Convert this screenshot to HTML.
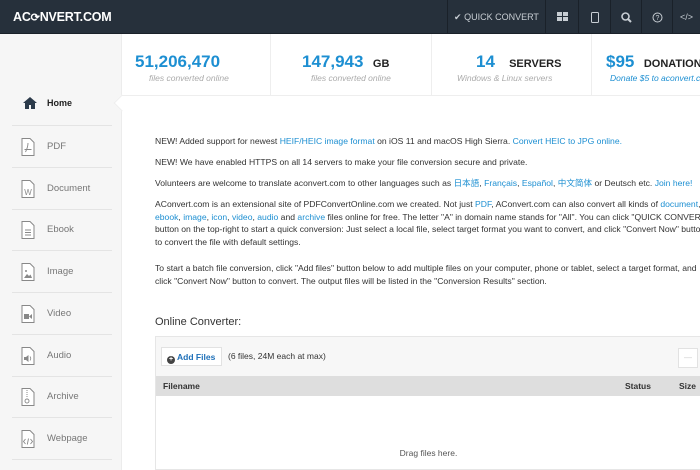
<!DOCTYPE html>
<html><head><meta charset="utf-8"><style>
*{margin:0;padding:0;box-sizing:border-box}
body{width:700px;height:470px;overflow:hidden;background:#fff;font-family:"Liberation Sans","Noto Sans CJK SC",sans-serif;position:relative;color:#333}
.hd{position:absolute;left:0;top:0;width:700px;height:34px;background:#26303b;border-bottom:1px solid #1a2129}
.logo{position:absolute;left:13px;top:10px;color:#fff;font-weight:bold;font-size:12.5px;letter-spacing:-0.2px}
.nav{position:absolute;top:0;height:34px;border-left:1px solid #1a2129;color:#c8ced4;font-size:9px;display:flex;align-items:center;justify-content:center}
.side{position:absolute;left:0;top:34px;width:122px;height:436px;background:#f6f6f6;border-right:1px solid #ececec}
.it{position:absolute;left:12px;width:100px;height:42px;border-bottom:1px solid #e4e4e4;font-size:9.5px;color:#777}
.it span{position:absolute;left:35px;top:15px}
.it svg{position:absolute;left:9px;top:12px}
.stat{position:absolute;top:34px;height:61px;border-right:1px solid #eee;text-align:center}
.n{color:#1d8fd2;font-size:17px;font-weight:bold;position:absolute;top:18px;white-space:nowrap}
.u{color:#222;font-size:11px;font-weight:bold}
.s{color:#aaa;font-size:8.5px;font-style:italic;position:absolute;top:39px;white-space:nowrap}
p{position:absolute;left:155px;font-size:8.6px;line-height:12.5px;color:#333;white-space:nowrap}
a{color:#1d8fd2;text-decoration:none}
</style></head><body>
<div class="hd">
<div class="logo">AC<span style="font-size:11px">⟳</span>NVERT.COM</div>
<div class="nav" style="left:447px;width:98px">✔&nbsp;QUICK CONVERT</div>
<div class="nav" style="left:545px;width:33px"><svg width="11" height="10"><rect x="0" y="0" width="5" height="4" fill="#c8ced4"/><rect x="6" y="0" width="5" height="4" fill="#c8ced4"/><rect x="0" y="5" width="5" height="4" fill="#c8ced4"/><rect x="6" y="5" width="5" height="4" fill="#c8ced4"/></svg></div>
<div class="nav" style="left:578px;width:32px"><svg width="8" height="11"><rect x="0.5" y="0.5" width="7" height="10" rx="1" fill="none" stroke="#c8ced4"/></svg></div>
<div class="nav" style="left:610px;width:31px"><svg width="11" height="11"><circle cx="4.5" cy="4.5" r="3.5" fill="none" stroke="#c8ced4" stroke-width="1.6"/><path d="M7 7l3 3" stroke="#c8ced4" stroke-width="2"/></svg></div>
<div class="nav" style="left:641px;width:31px"><svg width="11" height="11"><circle cx="5.5" cy="5.5" r="4.5" fill="none" stroke="#c8ced4"/><text x="5.5" y="8" font-size="7" fill="#c8ced4" text-anchor="middle" font-family="Liberation Sans">?</text></svg></div>
<div class="nav" style="left:672px;width:28px">&lt;/&gt;</div>
</div>
<div class="side">
<div class="it" style="top:50px;height:38px;background:#f6f6f6;border:none"><svg width="14" height="12" style="left:11px;top:13px"><path d="M7 0L0 6h2v6h4V8h2v4h4V6h2z" fill="#2b3a4a"/></svg><span style="color:#222;font-weight:bold;left:35px;top:14px;font-size:9px">Home</span></div>
</div>
<div style="position:absolute;left:116px;top:97px;width:12px;height:12px;background:#fff;transform:rotate(45deg);border-left:1px solid #eee;border-bottom:1px solid #eee"></div>
<div style="position:absolute;left:12px;top:125px;width:100px;border-top:1px solid #e4e4e4"></div>
<div class="it" style="top:126px"><svg width="14" height="18"><path d="M1 .5h8l4 4v13h-12z" fill="#fff" stroke="#888"/><path d="M4.5 14c1.5-3 2.5-6 2.5-9M3.5 11.5h7" stroke="#888" fill="none" stroke-width=".9"/></svg><span>PDF</span></div>
<div class="it" style="top:168px"><svg width="14" height="18"><path d="M1 .5h8l4 4v13h-12z" fill="#fff" stroke="#888"/><text x="7" y="15" font-size="8" fill="#888" text-anchor="middle" font-family="Liberation Sans">W</text></svg><span>Document</span></div>
<div class="it" style="top:209px"><svg width="14" height="18"><path d="M1 .5h8l4 4v13h-12z" fill="#fff" stroke="#888"/><path d="M4 9h6M4 11.5h6M4 14h6" stroke="#888" stroke-width=".9"/></svg><span>Ebook</span></div>
<div class="it" style="top:251px"><svg width="14" height="18"><path d="M1 .5h8l4 4v13h-12z" fill="#fff" stroke="#888"/><path d="M3 15l3-4 2 2 1.5-1.5 1.5 3.5z" fill="#888"/><circle cx="5" cy="8" r="1" fill="#888"/></svg><span>Image</span></div>
<div class="it" style="top:293px"><svg width="14" height="18"><path d="M1 .5h8l4 4v13h-12z" fill="#fff" stroke="#888"/><rect x="3" y="9" width="5" height="5" fill="#888"/><path d="M8 11.5l3-2.5v5z" fill="#888"/></svg><span>Video</span></div>
<div class="it" style="top:335px"><svg width="14" height="18"><path d="M1 .5h8l4 4v13h-12z" fill="#fff" stroke="#888"/><path d="M3 10h2l2.5-2v7l-2.5-2H3z" fill="#888"/><path d="M9 9.5q1.5 2 0 4" stroke="#888" fill="none" stroke-width=".8"/></svg><span>Audio</span></div>
<div class="it" style="top:376px"><svg width="14" height="18"><path d="M1 .5h8l4 4v13h-12z" fill="#fff" stroke="#888"/><path d="M6 2v8" stroke="#888" stroke-dasharray="1 1"/><circle cx="6" cy="13" r="2" fill="none" stroke="#888" stroke-width=".9"/></svg><span>Archive</span></div>
<div class="it" style="top:418px"><svg width="14" height="18"><path d="M1 .5h8l4 4v13h-12z" fill="#fff" stroke="#888"/><path d="M4.5 9l-2 2.5 2 2.5M9.5 9l2 2.5-2 2.5M7.5 8.5l-1.2 6" stroke="#888" fill="none" stroke-width=".9"/></svg><span>Webpage</span></div>

<div class="stat" style="left:122px;width:149px"><div class="n" style="left:13px">51,206,470</div><div class="s" style="left:27px">files converted online</div></div>
<div class="stat" style="left:271px;width:161px"><div class="n" style="left:31px">147,943 &nbsp;<span class="u">GB</span></div><div class="s" style="left:40px">files converted online</div></div>
<div class="stat" style="left:432px;width:160px"><div class="n" style="left:44px">14 &nbsp;&nbsp;<span class="u">SERVERS</span></div><div class="s" style="left:25px">Windows &amp; Linux servers</div></div>
<div class="stat" style="left:592px;width:110px;border:none"><div class="n" style="left:14px">$95 &nbsp;<span class="u">DONATIONS</span></div><div class="s" style="left:18px;color:#1d8fd2">Donate $5 to aconvert.com</div></div>
<div style="position:absolute;left:122px;top:95px;width:578px;border-top:1px solid #eee"></div>

<p style="top:135px">NEW! Added support for newest <a>HEIF/HEIC image format</a> on iOS 11 and macOS High Sierra. <a>Convert HEIC to JPG online.</a></p>
<p style="top:156px">NEW! We have enabled HTTPS on all 14 servers to make your file conversion secure and private.</p>
<p style="top:177px">Volunteers are welcome to translate aconvert.com to other languages such as <a>日本語</a>, <a>Français</a>, <a>Español</a>, <a>中文简体</a> or Deutsch etc. <a>Join here!</a></p>
<p style="top:198px">AConvert.com is an extensional site of PDFConvertOnline.com we created. Not just <a>PDF</a>, AConvert.com can also convert all kinds of <a>document</a>,<br><a>ebook</a>, <a>image</a>, <a>icon</a>, <a>video</a>, <a>audio</a> and <a>archive</a> files online for free. The letter "A" in domain name stands for "All". You can click "QUICK CONVERT"<br>button on the top-right to start a quick conversion: Just select a local file, select target format you want to convert, and click "Convert Now" button<br>to convert the file with default settings.</p>
<p style="top:262px">To start a batch file conversion, click "Add files" button below to add multiple files on your computer, phone or tablet, select a target format, and<br>click "Convert Now" button to convert. The output files will be listed in the "Conversion Results" section.</p>
<p style="top:316px;font-size:11px;color:#333">Online Converter:</p>

<div style="position:absolute;left:155px;top:336px;width:545px;height:134px;border:1px solid #e6e6e6;border-right:none">
<div style="height:39px;background:#f7f7f7;position:relative">
<div style="position:absolute;left:5px;top:10px;width:61px;height:19px;background:#fff;border:1px solid #e2e2e2;font-size:8.5px;font-weight:bold;color:#1d6fb8;padding:4px 0 0 5px"><span style="display:inline-block;width:8px;height:8px;border-radius:50%;background:#444;color:#fff;font-size:7px;line-height:8px;text-align:center;vertical-align:-1px">+</span> Add Files</div>
<div style="position:absolute;left:72px;top:14px;font-size:8.5px;color:#333">(6 files, 24M each at max)</div>
<div style="position:absolute;left:522px;top:11px;width:20px;height:20px;background:#fff;border:1px solid #e2e2e2;color:#ccc;font-size:8px;text-align:center;line-height:18px">—</div>
</div>
<div style="height:20px;background:#dedede;position:relative;font-size:8.5px;font-weight:bold;color:#333">
<span style="position:absolute;left:7px;top:5px">Filename</span><span style="position:absolute;left:469px;top:5px">Status</span><span style="position:absolute;left:523px;top:5px">Size</span></div>
<div style="position:absolute;left:0;top:111px;width:545px;text-align:center;font-size:8.5px;color:#555">Drag files here.</div>
</div>
</body></html>
